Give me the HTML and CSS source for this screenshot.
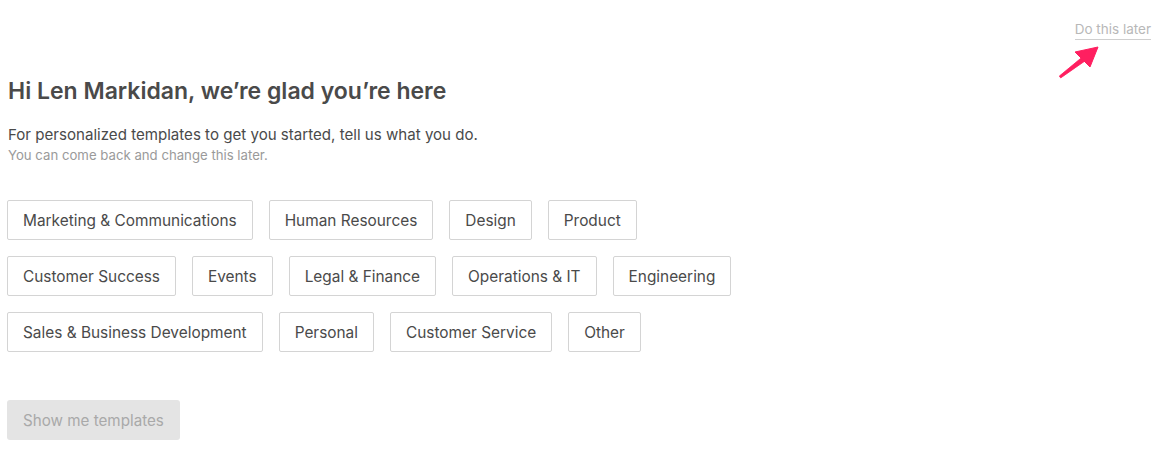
FILE: index.html
```html
<!DOCTYPE html>
<html>
<head>
<meta charset="utf-8">
<link rel="stylesheet" href="styles.css">
</head>
<body>
<div class="page">
  <div class="topbar">
    <a class="later">Do this later</a>
    <svg class="arrow" width="44" height="38" viewBox="0 0 44 38">
      <path d="M1.3 32.1 L25.5 12.1 L28.5 15.9 L2.7 33.9 Z" fill="#ff1f60" stroke="#ff1f60" stroke-width="0.8" stroke-linejoin="round"/>
      <path d="M40 3 L17 8 L32 23 Z" fill="#ff1f60" stroke="#ff1f60" stroke-width="1" stroke-linejoin="round"/>
    </svg>
  </div>
  <h1 class="title">Hi Len Markidan, we’re glad you’re here</h1>
  <p class="lead">For personalized templates to get you started, tell us what you do.</p>
  <p class="hint">You can come back and change this later.</p>
  <div class="options">
    <div class="row">
      <button class="opt">Marketing &amp; Communications</button>
      <button class="opt">Human Resources</button>
      <button class="opt">Design</button>
      <button class="opt">Product</button>
    </div>
    <div class="row">
      <button class="opt">Customer Success</button>
      <button class="opt">Events</button>
      <button class="opt">Legal &amp; Finance</button>
      <button class="opt">Operations &amp; IT</button>
      <button class="opt">Engineering</button>
    </div>
    <div class="row">
      <button class="opt">Sales &amp; Business Development</button>
      <button class="opt">Personal</button>
      <button class="opt">Customer Service</button>
      <button class="opt">Other</button>
    </div>
  </div>
  <button class="submit">Show me templates</button>
</div>
</body>
</html>
```
FILE: styles.css
```css
html, body {
  margin: 0;
  padding: 0;
  background: #fff;
}
body {
  font-family: Inter, Roboto, "Liberation Sans", sans-serif;
  color: #4a4a4a;
}
.page {
  padding: 0 9px 0 7px;
  display: flex;
  flex-direction: column;
  align-items: flex-start;
}
.topbar {
  align-self: stretch;
  display: flex;
  flex-direction: column;
  align-items: flex-end;
  padding-top: 20px;
  height: 57px;
  position: relative;
}
.later {
  font-size: 13.5px;
  color: #b8b8b8;
  line-height: 18px;
  padding-bottom: 1px;
  border-bottom: 1px solid #cfcfcf;
}
.arrow {
  position: absolute;
  right: 49px;
  top: 44px;
}
.title {
  margin: 0 0 0 1px;
  font-size: 23px;
  font-weight: 600;
  line-height: 28px;
  color: #4a4a4a;
}
.lead {
  margin: 20px 0 0 1px;
  font-size: 15.1px;
  line-height: 20px;
  color: #4a4a4a;
}
.hint {
  margin: 2px 0 0 1px;
  font-size: 13.2px;
  line-height: 16px;
  color: #9a9a9a;
}
.options {
  margin-top: 37px;
  display: flex;
  flex-direction: column;
  gap: 16px;
}
.row {
  display: flex;
  gap: 16px;
}
.opt {
  height: 40px;
  padding: 0 15px;
  border: 1px solid #d4d4d4;
  border-radius: 2px;
  background: #fff;
  font-family: inherit;
  font-size: 15.4px;
  color: #4a4a4a;
  cursor: pointer;
}
.submit {
  margin-top: 48px;
  height: 40px;
  padding: 0 16px;
  border: none;
  border-radius: 3px;
  background: #e4e4e4;
  font-family: inherit;
  font-size: 15.2px;
  color: #a9a9a9;
}
```
